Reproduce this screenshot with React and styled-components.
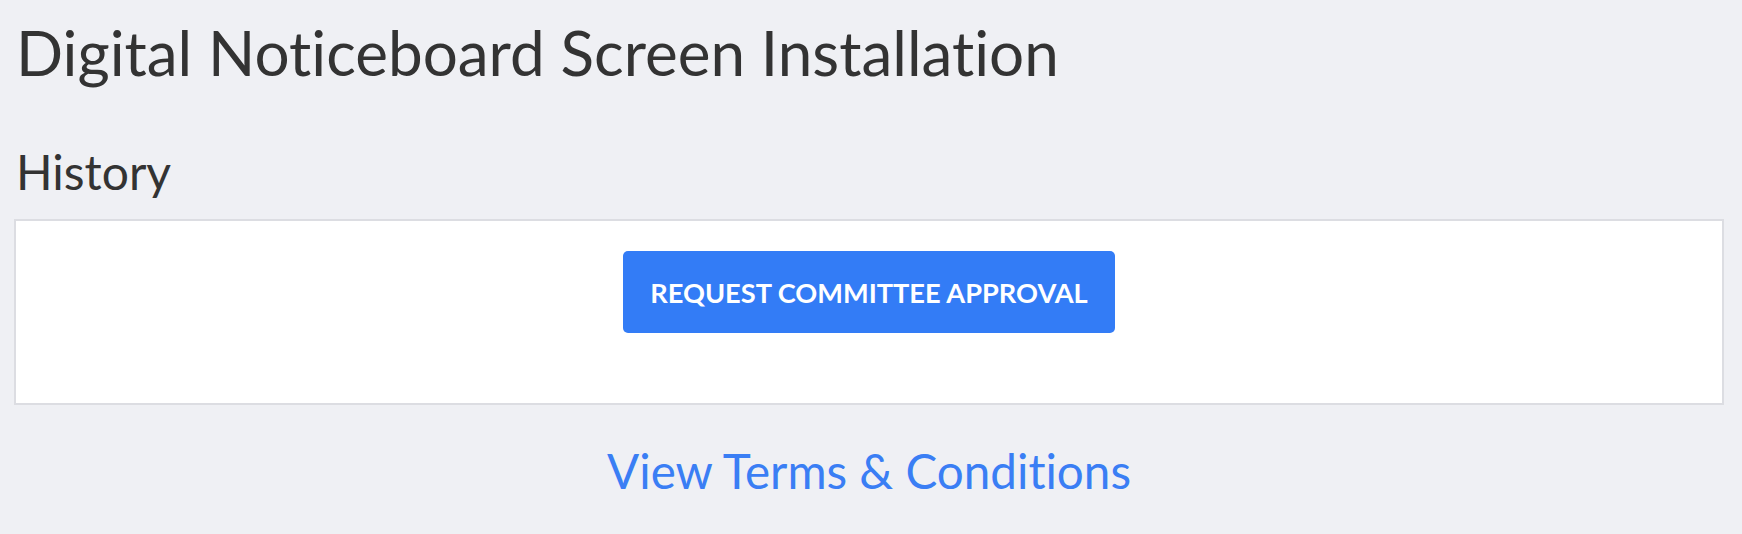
import styled, { createGlobalStyle } from "styled-components";

const GlobalStyle = createGlobalStyle`
    html, body {
        margin: 0;
        padding: 0;
        background: #eff0f4;
    }
    body {
        font-family: Lato, "Open Sans", "Liberation Sans", sans-serif;
        font-variant-ligatures: none;
        color: #333333;
    }
`;

const Page = styled.div`
    display: flex;
    flex-direction: column;
    padding: 0 18px 0 14px;
    min-height: 534px;
    box-sizing: border-box;
`;

const Title = styled.h1`
    margin: 0;
    padding: 14px 0 0 2px;
    font-size: 62px;
    font-weight: 400;
    line-height: 76px;
`;

const SectionTitle = styled.h2`
    margin: 52px 0 0;
    padding-left: 2px;
    font-size: 48px;
    font-weight: 400;
    line-height: 60px;
`;

const Panel = styled.div`
    display: flex;
    justify-content: center;
    align-items: flex-start;
    margin-top: 17px;
    height: 186px;
    box-sizing: border-box;
    padding-top: 30px;
    background: #ffffff;
    border: 2px solid #dcdde2;
`;

const PrimaryButton = styled.button`
    height: 82px;
    padding: 0 27px;
    border: none;
    border-radius: 5px;
    background: #337cf6;
    color: #ffffff;
    font-family: inherit;
    font-variant-ligatures: none;
    font-size: 27.2px;
    font-weight: 700;
    cursor: pointer;
`;

const Footer = styled.div`
    display: flex;
    justify-content: center;
    padding-top: 36px;
`;

const TermsLink = styled.a`
    color: #3a7ef4;
    font-size: 47.6px;
    line-height: 60px;
    text-decoration: none;
`;

export default function App() {
    return (
        <>
            <GlobalStyle />
            <Page>
                <Title>Digital Noticeboard Screen Installation</Title>
                <SectionTitle>History</SectionTitle>
                <Panel>
                    <PrimaryButton>REQUEST COMMITTEE APPROVAL</PrimaryButton>
                </Panel>
                <Footer>
                    <TermsLink href="#">View Terms &amp; Conditions</TermsLink>
                </Footer>
            </Page>
        </>
    );
}
